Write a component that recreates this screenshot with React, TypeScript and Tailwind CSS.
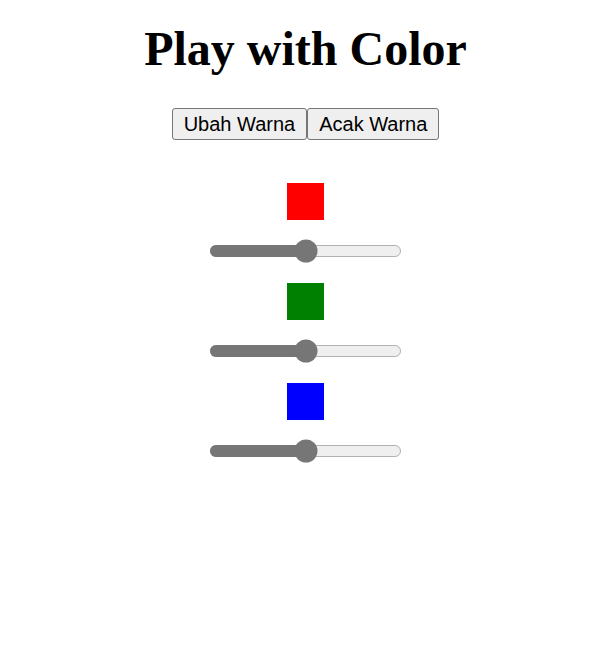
import { useState } from "react";

const swatches = [
  { id: "red", color: "bg-[#ff0000]" },
  { id: "green", color: "bg-[#008000]" },
  { id: "blue", color: "bg-[#0000ff]" },
];

function ColorRow({ color }: { color: string }) {
  const [value, setValue] = useState(50);
  return (
    <div className="flex flex-col items-center">
      <div className={`w-[37.5px] h-[37.5px] ${color}`} />
      <div className="mt-[18.5px] h-[24px] flex items-center">
        <input
          type="range"
          min={0}
          max={100}
          value={value}
          onChange={(e) => setValue(Number(e.target.value))}
          className="m-0 w-[129px] [zoom:1.5] accent-[#767676]"
        />
      </div>
    </div>
  );
}

export default function App() {
  return (
    <div className="min-h-[654px] bg-white pl-[5px] flex flex-col items-center font-['Liberation_Serif',serif] text-black">
      <h1 className="mt-[21px] text-[48px] leading-[55px] font-bold">Play with Color</h1>
      <div className="mt-[32px] flex font-['Liberation_Sans',Arial,sans-serif] text-[20px] leading-[23px]">
        <button className="px-[11px] py-[3.5px] bg-[#efefef] border border-[#767676] rounded-[3px]">Ubah Warna</button>
        <button className="px-[11px] py-[3.5px] bg-[#efefef] border border-[#767676] rounded-[3px]">Acak Warna</button>
      </div>
      <div className="mt-[42.5px] flex flex-col gap-[20px]">
        {swatches.map((s) => (
          <ColorRow key={s.id} color={s.color} />
        ))}
      </div>
    </div>
  );
}
